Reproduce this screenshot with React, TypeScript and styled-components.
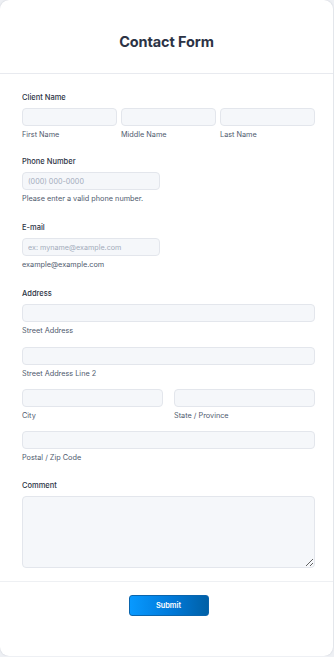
import styled, { createGlobalStyle } from 'styled-components'
import { FC, PropsWithChildren } from 'react'

const GlobalStyle = createGlobalStyle`
  html, body {
    margin: 0;
    padding: 0;
    background: #eef0f4;
  }
  * {
    box-sizing: border-box;
  }
`

const Card = styled.form`
  width: 333px;
  height: 656px;
  background: #ffffff;
  border-radius: 9px;
  box-shadow: 0 0 2px rgba(40, 50, 80, 0.18);
  font-family: Inter, 'Noto Sans', sans-serif;
  color: #2c3345;
  display: flex;
  flex-direction: column;
  overflow: hidden;
`

const Header = styled.header`
  height: 74px;
  border-bottom: 1px solid #e8eaef;
  display: flex;
  align-items: center;
  justify-content: center;
  padding-top: 10px;
`

const Title = styled.h1`
  margin: 0;
  font-size: 14.5px;
  font-weight: 700;
  letter-spacing: -0.1px;
  color: #2c3345;
`

const Body = styled.div`
  padding: 19px 18px 13px 22px;
  display: flex;
  flex-direction: column;
  border-bottom: 1px solid #eef0f3;
`

const Section = styled.div<{ $gap?: number }>`
  display: flex;
  flex-direction: column;
  margin-top: ${({ $gap }) => $gap ?? 0}px;
`

const Label = styled.label`
  font-size: 7.5px;
  font-weight: 550;
  line-height: 10px;
  margin-bottom: 5px;
  color: #2c3345;
`

const Row = styled.div<{ $cols: string; $gap: number }>`
  display: grid;
  grid-template-columns: ${({ $cols }) => $cols};
  column-gap: ${({ $gap }) => $gap}px;
`

const Cell = styled.div<{ $gap?: number }>`
  display: flex;
  flex-direction: column;
  margin-top: ${({ $gap }) => $gap ?? 0}px;
  min-width: 0;
`

const Input = styled.input<{ $width?: number }>`
  height: 18px;
  width: ${({ $width }) => ($width ? `${$width}px` : '100%')};
  border: 1px solid #e3e6ec;
  border-radius: 4px;
  background: #f5f7fa;
  padding: 0 5px;
  font-family: Inter, 'Noto Sans', sans-serif;
  font-size: 7.2px;
  color: #2c3345;
  outline: none;
  &::placeholder {
    color: #a3acbb;
  }
`

const TextArea = styled.textarea`
  height: 72px;
  width: 100%;
  border: 1px solid #e3e6ec;
  border-radius: 4px;
  background: #f5f7fa;
  resize: vertical;
  outline: none;
  font-family: Inter, 'Noto Sans', sans-serif;
`

const SubLabel = styled.span`
  font-size: 7.3px;
  line-height: 10px;
  margin-top: 4px;
  color: #4f5a6e;
`

const Footer = styled.footer`
  padding: 13px 18px 0 22px;
  display: flex;
  justify-content: center;
`

const SubmitButton = styled.button`
  width: 80px;
  height: 21px;
  border: 1px solid #0a65ad;
  border-radius: 3px;
  background: linear-gradient(90deg, #0899ff 0%, #0078d7 55%, #0060a6 100%);
  color: #ffffff;
  font-family: Inter, 'Noto Sans', sans-serif;
  font-size: 7.4px;
  font-weight: 600;
  cursor: pointer;
`

const Field: FC<PropsWithChildren<{ label: string; gap?: number }>> = ({ label, gap, children }) => (
  <Section $gap={gap}>
    <Label>{label}</Label>
    {children}
  </Section>
)

const Labeled: FC<{ sub: string; gap?: number; placeholder?: string }> = ({ sub, gap, placeholder }) => (
  <Cell $gap={gap}>
    <Input placeholder={placeholder} />
    <SubLabel>{sub}</SubLabel>
  </Cell>
)

export default function App() {
  return (
    <>
      <GlobalStyle />
      <Card onSubmit={(e) => e.preventDefault()}>
        <Header>
          <Title>Contact Form</Title>
        </Header>
        <Body>
          <Field label="Client Name">
            <Row $cols="1fr 1fr 1fr" $gap={4}>
              <Labeled sub="First Name" />
              <Labeled sub="Middle Name" />
              <Labeled sub="Last Name" />
            </Row>
          </Field>

          <Field label="Phone Number" gap={17}>
            <Input $width={138} placeholder="(000) 000-0000" />
            <SubLabel>Please enter a valid phone number.</SubLabel>
          </Field>

          <Field label="E-mail" gap={19}>
            <Input $width={138} placeholder="ex: myname@example.com" />
            <SubLabel>example@example.com</SubLabel>
          </Field>

          <Field label="Address" gap={19}>
            <Labeled sub="Street Address" />
            <Labeled sub="Street Address Line 2" gap={11} />
            <Row $cols="141px 1fr" $gap={11}>
              <Labeled sub="City" gap={10} />
              <Labeled sub="State / Province" gap={10} />
            </Row>
            <Labeled sub="Postal / Zip Code" gap={10} />
          </Field>

          <Field label="Comment" gap={18}>
            <TextArea />
          </Field>
        </Body>
        <Footer>
          <SubmitButton type="submit">Submit</SubmitButton>
        </Footer>
      </Card>
    </>
  )
}
